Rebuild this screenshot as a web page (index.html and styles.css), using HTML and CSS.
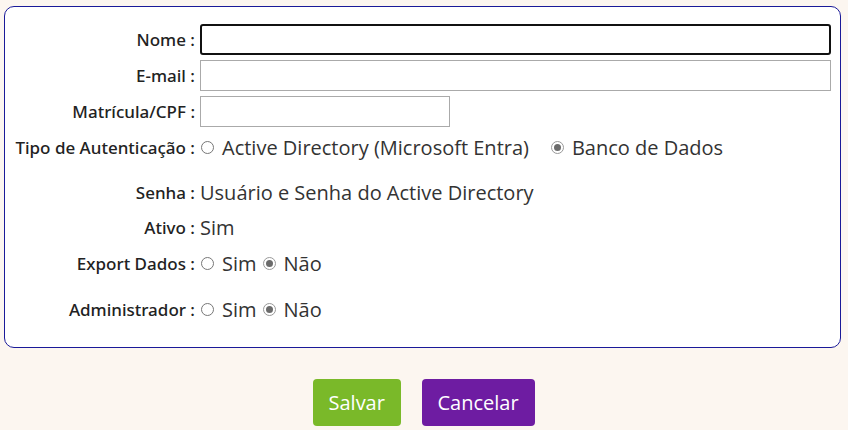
FILE: index.html
```html
<!DOCTYPE html>
<html lang="pt-BR">
<head>
<meta charset="utf-8">
<title>Usuário</title>
<link rel="stylesheet" href="styles.css">
</head>
<body>
<div class="page">
  <div class="box">
    <div class="row row-input">
      <div class="label">Nome :</div>
      <div class="field"><input class="input input-wide input-focus" type="text"></div>
    </div>
    <div class="row row-input">
      <div class="label">E-mail :</div>
      <div class="field"><input class="input input-wide" type="text"></div>
    </div>
    <div class="row row-input">
      <div class="label">Matrícula/CPF :</div>
      <div class="field"><input class="input input-short" type="text"></div>
    </div>
    <div class="row row-tipo">
      <div class="label">Tipo de Autenticação :</div>
      <div class="field">
        <span class="radio"></span><span class="opt">Active Directory (Microsoft Entra)</span>
        <span class="radio checked sep"></span><span class="opt">Banco de Dados</span>
      </div>
    </div>
    <div class="row row-senha">
      <div class="label">Senha :</div>
      <div class="field value">Usuário e Senha do Active Directory</div>
    </div>
    <div class="row row-ativo">
      <div class="label">Ativo :</div>
      <div class="field value">Sim</div>
    </div>
    <div class="row row-export">
      <div class="label">Export Dados :</div>
      <div class="field">
        <span class="radio"></span><span class="opt">Sim</span>
        <span class="radio checked small-sep"></span><span class="opt">Não</span>
      </div>
    </div>
    <div class="row row-admin">
      <div class="label">Administrador :</div>
      <div class="field">
        <span class="radio"></span><span class="opt">Sim</span>
        <span class="radio checked small-sep"></span><span class="opt">Não</span>
      </div>
    </div>
  </div>
  <div class="actions">
    <button class="btn btn-save">Salvar</button>
    <button class="btn btn-cancel">Cancelar</button>
  </div>
</div>
</body>
</html>
```
FILE: styles.css
```css
html, body {
  margin: 0;
  padding: 0;
  background: #fcf6f0;
  font-family: "Open Sans", "Noto Sans", sans-serif;
  color: #333;
}
.page {
  padding: 6px 7px 0 4px;
  width: 848px;
  height: 430px;
  box-sizing: border-box;
  overflow: hidden;
}
.box {
  background: #fff;
  border: 1px solid #1a1a99;
  border-radius: 10px;
  padding: 14px 0 0 0;
  height: 342px;
  box-sizing: border-box;
}
.row {
  display: flex;
  align-items: center;
}
.label {
  width: 190px;
  text-align: right;
  font-family: "Noto Sans", "Open Sans", sans-serif;
  font-weight: 500;
  font-size: 17px;
  color: #222;
  padding-right: 5px;
  white-space: nowrap;
}
.field {
  display: flex;
  align-items: center;
  font-size: 20px;
  color: #333;
  white-space: nowrap;
}
.row-input { height: 36px; }
.row-tipo { height: 37px; }
.row-senha { height: 36px; margin-top: 8px; }
.row-ativo { height: 35px; }
.row-export { height: 36px; }
.row-admin { height: 36px; margin-top: 10px; }
.input {
  height: 31px;
  box-sizing: border-box;
  border: 1px solid #aaa;
  border-radius: 0;
  margin: 0;
  padding: 2px 4px;
  font-family: inherit;
  font-size: 16px;
  background: #fff;
  outline: none;
}
.input-wide { width: 631px; }
.input-short { width: 250px; }
.input-focus {
  border: 2px solid #111;
  border-radius: 3px;
}
.radio {
  display: inline-block;
  width: 13px;
  height: 13px;
  box-sizing: border-box;
  border: 1px solid #777;
  border-radius: 50%;
  background: #fff;
  margin: 0 8px 0 1px;
  position: relative;
}
.radio.checked {
  border-color: #999;
}
.radio.checked::after {
  content: "";
  position: absolute;
  left: 2px;
  top: 2px;
  width: 7px;
  height: 7px;
  border-radius: 50%;
  background: #6b6b6b;
}
.sep { margin-left: 22px; }
.small-sep { margin-left: 6px; }
.actions {
  display: flex;
  justify-content: center;
  gap: 21px;
  margin-top: 31px;
  padding-left: 2px;
}
.btn {
  height: 47px;
  border: none;
  border-radius: 4px;
  color: #fff;
  font-family: "Open Sans", "Noto Sans", sans-serif;
  font-size: 20px;
  padding: 0 16px;
  cursor: pointer;
}
.btn-save { background: #7ab929; width: 88px; }
.btn-cancel { background: #6e1ca2; width: 113px; }
```
